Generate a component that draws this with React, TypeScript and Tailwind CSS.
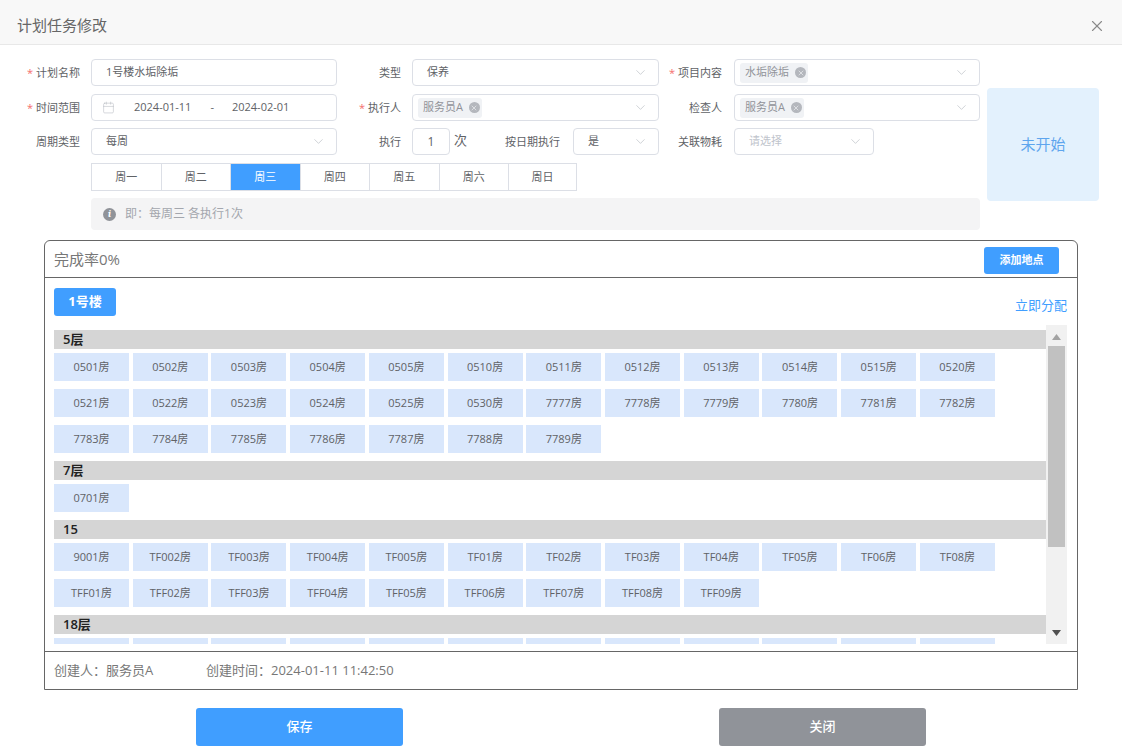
import { ChevronDown, X, Calendar } from "lucide-react";

const FONT = "[font-family:'Open_Sans','Noto_Sans_CJK_SC',sans-serif]";

const floors = [
  {
    name: "5层",
    rooms: ["0501", "0502", "0503", "0504", "0505", "0510", "0511", "0512", "0513", "0514", "0515", "0520", "0521", "0522", "0523", "0524", "0525", "0530", "7777", "7778", "7779", "7780", "7781", "7782", "7783", "7784", "7785", "7786", "7787", "7788", "7789"],
  },
  { name: "7层", rooms: ["0701"] },
  {
    name: "15",
    rooms: ["9001", "TF002", "TF003", "TF004", "TF005", "TF01", "TF02", "TF03", "TF04", "TF05", "TF06", "TF08", "TFF01", "TFF02", "TFF03", "TFF04", "TFF05", "TFF06", "TFF07", "TFF08", "TFF09"],
  },
  // only the top of this row is visible above the scroll edge
  { name: "18层", rooms: ["", "", "", "", "", "", "", "", "", "", "", ""] },
];

const weekdays = ["周一", "周二", "周三", "周四", "周五", "周六", "周日"];

function Label({ width, pad = "pr-[11px]", required, children }: { width: string; pad?: string; required?: boolean; children: string }) {
  return (
    <div className={`${width} ${pad} shrink-0 text-right text-[11px] leading-[27px] text-[#606266]`}>
      {required && <span className="mr-[3px] text-[#f56c6c]">*</span>}
      {children}
    </div>
  );
}

function Tag({ children }: { children: string }) {
  return (
    <span className="flex h-[20px] items-center gap-[6px] rounded-[3px] bg-[#f0f2f5] pl-[5px] pr-[2px] text-[11px] text-[#909399]">
      {children}
      <span className="flex h-[11px] w-[11px] items-center justify-center rounded-full bg-[#b4b7bd]">
        <X size={8} strokeWidth={2} className="text-[#f0f2f5]" />
      </span>
    </span>
  );
}

function Select({ width, pad = "pl-[14px]", muted, children }: { width: string; pad?: string; muted?: boolean; children: React.ReactNode }) {
  return (
    <div className={`${width} ${pad} flex h-full shrink-0 items-center justify-between rounded-[4px] border border-[#dcdfe6] bg-white pr-[10px] text-[11px] ${muted ? "text-[#c0c4cc]" : "text-[#606266]"}`}>
      <div className="flex items-center">{children}</div>
      <ChevronDown size={15} strokeWidth={1} className="text-[#b4b8bf]" />
    </div>
  );
}

function Room({ id }: { id: string }) {
  return (
    <div className="flex h-[28px] w-[75px] items-center justify-center bg-[#d9e7fc] text-[11px] text-[#606266]">
      {id && `${id}房`}
    </div>
  );
}

export default function App() {
  return (
    <div className={`${FONT} h-[756px] w-[1122px] overflow-hidden bg-white`}>
      {/* Title bar */}
      <div className="flex h-[45px] items-center justify-between border-b border-[#e8e8e8] bg-[#f8f8f8] pl-[17px] pr-[16px] pt-[7px]">
        <span className="text-[15px] text-[#666]">计划任务修改</span>
        <X size={18} strokeWidth={1.5} className="text-[#8a8a8a]" />
      </div>

      {/* Form */}
      <div className="flex items-start pt-[14px]">
        <div className="w-[980px] shrink-0">
          <div className="flex h-[27px]">
            <Label width="w-[91px]" required>计划名称</Label>
            <div className="flex h-full w-[246px] shrink-0 items-center rounded-[4px] border border-[#dcdfe6] pl-[14px] text-[11px] text-[#606266]">
              1号楼水垢除垢
            </div>
            <Label width="w-[75px]">类型</Label>
            <Select width="w-[247px]">保养</Select>
            <Label width="w-[75px]" pad="pr-[12px]" required>项目内容</Label>
            <Select width="w-[246px]" pad="pl-[5px]"><Tag>水垢除垢</Tag></Select>
          </div>

          <div className="mt-[8px] flex h-[27px]">
            <Label width="w-[91px]" required>时间范围</Label>
            <div className="flex h-full w-[246px] shrink-0 items-center rounded-[4px] border border-[#dcdfe6] pl-[10px] text-[11px] text-[#606266]">
              <Calendar size={13} strokeWidth={1} className="text-[#b4b8bf]" />
              <span className="ml-[19px]">2024-01-11</span>
              <span className="ml-[19px]">-</span>
              <span className="ml-[18px]">2024-02-01</span>
            </div>
            <Label width="w-[75px]" required>执行人</Label>
            <Select width="w-[247px]" pad="pl-[5px]"><Tag>服务员A</Tag></Select>
            <Label width="w-[75px]" pad="pr-[12px]">检查人</Label>
            <Select width="w-[246px]" pad="pl-[5px]"><Tag>服务员A</Tag></Select>
          </div>

          <div className="mt-[7px] flex h-[27px]">
            <Label width="w-[91px]">周期类型</Label>
            <Select width="w-[246px]">每周</Select>
            <Label width="w-[75px]">执行</Label>
            <div className="flex h-full w-[38px] shrink-0 items-center justify-center rounded-[4px] border border-[#dcdfe6] text-[12px] text-[#606266]">
              1
            </div>
            <span className="ml-[4px] w-[51px] shrink-0 text-[13px] leading-[25px] text-[#606266]">次</span>
            <div className="w-[68px] shrink-0 text-[11px] leading-[27px] text-[#606266]">按日期执行</div>
            <Select width="w-[86px]">是</Select>
            <Label width="w-[75px]" pad="pr-[12px]">关联物耗</Label>
            <Select width="w-[140px]" muted>请选择</Select>
          </div>

          <div className="ml-[91px] mt-[8px] flex h-[28px] w-[486px] border border-[#dcdfe6]">
            {weekdays.map((d, i) => (
              <div
                key={d}
                className={`flex w-[69.5px] shrink-0 items-center justify-center border-r border-[#dcdfe6] text-[11px] last:w-auto last:flex-1 last:border-r-0 ${i === 2 ? "bg-[#409eff] text-white" : "text-[#606266]"}`}
              >
                {d}
              </div>
            ))}
          </div>

          <div className="ml-[91px] mt-[7px] flex h-[32px] items-center rounded-[4px] bg-[#f4f4f5] pl-[12px] text-[12px] text-[#a3a6ad]">
            <span className="mr-[9px] flex h-[13px] w-[13px] items-center justify-center rounded-full bg-[#909399] font-serif text-[10px] font-bold italic leading-none text-white">
              i
            </span>
            即：每周三 各执行1次
          </div>
        </div>

        <div className="ml-[7px] mt-[29px] flex h-[113px] w-[112px] shrink-0 items-center justify-center rounded-[4px] bg-[#e3f1fd] text-[15px] text-[#5ea5ee]">
          未开始
        </div>
      </div>

      {/* Location panel */}
      <div className="ml-[44px] mt-[10px] w-[1034px] rounded-t-[6px] border border-[#666]">
        <div className="flex h-[37px] items-center justify-between border-b border-[#666] pl-[9px] pr-[18px]">
          <span className="text-[15px] text-[#777]">完成率0%</span>
          <button className="mt-[2px] h-[27px] w-[75px] rounded-[3px] bg-[#409eff] text-[11px] font-semibold text-white">添加地点</button>
        </div>

        <div className="h-[373px] pl-[9px] pr-[10px]">
          <div className="flex h-[47px] items-start justify-between pt-[10px]">
            <button className="h-[28px] w-[62px] rounded-[3px] bg-[#409eff] text-[13px] font-bold text-white">1号楼</button>
            <span className="mt-[8px] text-[13px] text-[#409eff]">立即分配</span>
          </div>

          <div className="flex h-[319px]">
            <div className="h-full w-[993px] overflow-hidden pt-[5px]">
              {floors.map((f) => (
                <div key={f.name}>
                  <div className="mb-[4px] h-[19px] bg-[#d5d5d5] pl-[9px] text-[13px] font-semibold leading-[19px] text-[#222]">
                    {f.name}
                  </div>
                  <div className="flex flex-wrap gap-x-[3.72px]">
                    {f.rooms.map((r, i) => (
                      <div key={`${r}-${i}`} className="mb-[8px]">
                        <Room id={r} />
                      </div>
                    ))}
                  </div>
                </div>
              ))}
            </div>

            {/* Scrollbar */}
            <div className="flex h-full w-[21px] flex-col items-center bg-[#f1f1f1]">
              <svg width="21" height="21" viewBox="0 0 21 21" className="shrink-0">
                <path d="M6 15 L10.5 9 L15 15 Z" fill="#a3a3a3" />
              </svg>
              <div className="h-[201px] w-[17px] bg-[#c1c1c1]" />
              <div className="flex-1" />
              <svg width="21" height="21" viewBox="0 0 21 21" className="shrink-0">
                <path d="M6 7 L15 7 L10.5 13 Z" fill="#505050" />
              </svg>
            </div>
          </div>
        </div>

        <div className="flex h-[38px] items-center border-t border-[#666] pl-[9px] text-[13px] text-[#777]">
          <span className="w-[152px]">创建人：服务员A</span>
          <span>创建时间：2024-01-11 11:42:50</span>
        </div>
      </div>

      {/* Actions */}
      <div className="mt-[18px] flex gap-[316px] pl-[196px]">
        <button className="h-[38px] w-[207px] rounded-[3px] bg-[#409eff] text-[13px] font-medium text-white">保存</button>
        <button className="h-[38px] w-[207px] rounded-[3px] bg-[#909399] text-[13px] font-medium text-white">关闭</button>
      </div>
    </div>
  );
}
